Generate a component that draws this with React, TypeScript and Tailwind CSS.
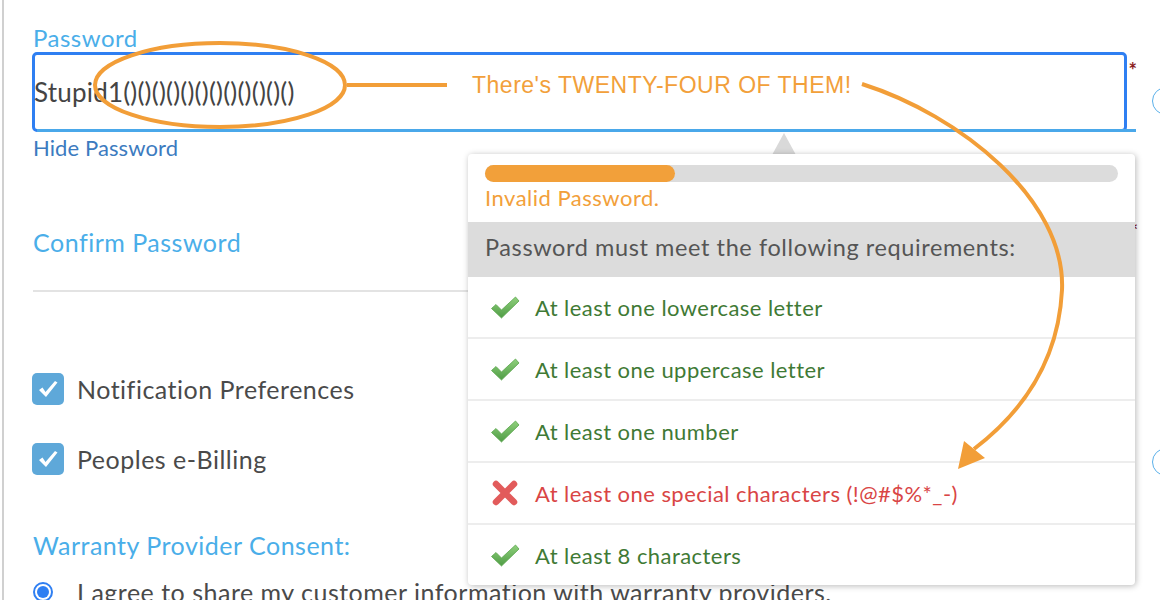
import { Fragment } from "react";

type Rule = {
  label: string;
  ok: boolean;
};

const rules: Rule[] = [
  { label: "At least one lowercase letter", ok: true },
  { label: "At least one uppercase letter", ok: true },
  { label: "At least one number", ok: true },
  { label: "At least one special characters (!@#$%*_-)", ok: false },
  { label: "At least 8 characters", ok: true },
];

const GreenCheck = () => (
  <svg width="30" height="26" viewBox="0 0 30 26">
    <defs>
      <linearGradient id="gc" x1="0" y1="0" x2="0" y2="1">
        <stop offset="0" stopColor="#8fd07c" />
        <stop offset="1" stopColor="#4f9c45" />
      </linearGradient>
    </defs>
    <path d="M1.5 14.5 L6 10.5 L11.5 16 L25.5 3 L29 7 L11.5 24 Z" fill="url(#gc)" stroke="#5aa64c" strokeWidth="0.8" strokeLinejoin="round" />
  </svg>
);

const RedX = () => (
  <svg width="28" height="28" viewBox="0 0 28 28">
    <path d="M5 5 L23 23 M23 5 L5 23" stroke="#e25b5b" strokeWidth="6.5" strokeLinecap="round" />
  </svg>
);

const BoxCheck = () => (
  <div className="flex h-[32px] w-[32px] items-center justify-center rounded-[5px] bg-[#5ea8d9]">
    <svg width="22" height="20" viewBox="0 0 22 20">
      <path d="M2 11 L5.5 8.5 L8.5 13 L18 2 L20.5 3.5 L9 18 Z" fill="#fff" strokeLinejoin="round" />
    </svg>
  </div>
);

const App = () => {
  return (
    <div className="relative h-[600px] w-[1160px] overflow-hidden bg-white font-['Lato',sans-serif]">
      {/* Form column */}
      <div className="ml-[2px] h-full border-l-2 border-[#d0d0d0] pl-[28px] pt-[26px]">
        <div className="ml-[1px] text-[24px] leading-[24px] tracking-[0.5px] text-[#4aaee9]">Password</div>

        <div className="relative mt-[2px] flex h-[80px] w-[1095px] items-center rounded-[5px] border-[3px] border-[#2f7ff2]">
          <span className="-ml-[1px] text-[26px] tracking-[0.2px] text-[#444]">Stupid1()()()()()()()()()()()()</span>
          <div className="absolute -bottom-[3px] left-[2px] -right-[12px] h-[3px] bg-[#4aa8ea]" />
          <span className="absolute -right-[13px] top-[0px] text-[20px] font-bold text-[#8b1c1c]">*</span>
        </div>

        <div className="ml-[1px] mt-[4px] text-[22px] leading-[24px] tracking-[0.1px] text-[#3c7bbf]">Hide Password</div>

        <div className="relative mt-[68px] w-[1095px]">
          <div className="ml-[1px] text-[25px] leading-[28px] tracking-[0.5px] text-[#4aaee9]">Confirm Password</div>
          <span className="absolute -right-[11px] -top-[12px] text-[20px] font-bold text-[#8b1c1c]">*</span>
        </div>
        <div className="ml-[1px] mt-[34px] h-[2px] w-[1094px] bg-[#e3e3e3]" />

        <div className="mt-[81px] flex items-center gap-[13px]">
          <BoxCheck />
          <span className="text-[25px] leading-[28px] tracking-[0.5px] text-[#4a4a4a]">Notification Preferences</span>
        </div>
        <div className="mt-[38px] flex items-center gap-[13px]">
          <BoxCheck />
          <span className="text-[25px] leading-[28px] tracking-[0.5px] text-[#4a4a4a]">Peoples e-Billing</span>
        </div>

        <div className="ml-[1px] mt-[56px] text-[25px] leading-[28px] tracking-[0.5px] text-[#4aaee9]">Warranty Provider Consent:</div>
        <div className="mt-[19px] flex items-center gap-[24px] pl-[1px]">
          <div className="flex h-[20px] w-[20px] items-center justify-center rounded-full border-2 border-[#2f7ff2] bg-white">
            <div className="h-[12px] w-[12px] rounded-full bg-[#2f7ff2]" />
          </div>
          <span className="whitespace-nowrap text-[25px] leading-[28px] tracking-[0.5px] text-[#4a4a4a]">
            I agree to share my customer information with warranty providers.
          </span>
        </div>
      </div>

      {/* Partially visible help circles */}
      <div className="absolute left-[1152px] top-[87px] h-[28px] w-[28px] rounded-full border-[1.5px] border-[#5ab0ea]" />
      <div className="absolute left-[1152px] top-[448px] h-[28px] w-[28px] rounded-full border-[1.5px] border-[#5ab0ea]" />

      {/* Popover arrow */}
      <svg className="absolute left-[772px] top-[133px]" width="24" height="22" viewBox="0 0 24 22">
        <polygon points="12,0 24,22 0,22" fill="#d9d9d9" />
      </svg>

      {/* Requirements popover */}
      <div className="absolute left-[468px] top-[154px] w-[667px] overflow-hidden rounded-[4px] bg-white shadow-[1px_1px_6px_rgba(0,0,0,0.28)]">
        <div className="px-[17px] pt-[11px]">
          <div className="h-[17px] w-full rounded-full bg-[#dcdcdc]">
            <div className="h-full w-[190px] rounded-full bg-[#f2a03a]" />
          </div>
          <div className="mt-[4px] text-[22px] leading-[24px] tracking-[0.5px] text-[#f2a03a]">Invalid Password.</div>
        </div>
        <div className="mt-[12px] flex h-[55px] items-center bg-[#dcdcdc] pb-[4px] pl-[17px] text-[23.5px] tracking-[0.6px] text-[#555]">
          Password must meet the following requirements:
        </div>
        {rules.map((rule, i) => (
          <Fragment key={rule.label}>
            {i > 0 && <div className="h-[2px] bg-[#ededed]" />}
            <div className="flex h-[60px] items-center gap-[15px] pl-[21px]">
              <div className="flex w-[31px] justify-center">{rule.ok ? <GreenCheck /> : <RedX />}</div>
              <span className={`text-[22px] tracking-[0.45px] ${rule.ok ? "text-[#3f7a35]" : "text-[#d94545]"}`}>{rule.label}</span>
            </div>
          </Fragment>
        ))}
      </div>

      {/* Orange annotation */}
      <svg className="pointer-events-none absolute left-0 top-0" width="1160" height="600" viewBox="0 0 1160 600">
        <ellipse cx="220" cy="85" rx="125" ry="42" fill="none" stroke="#f29e38" strokeWidth="4" />
        <line x1="347" y1="85" x2="447" y2="85" stroke="#f29e38" strokeWidth="4" />
        <path d="M862 84 C 960 115, 1066 200, 1062 290 C 1058 370, 1012 420, 974 449" fill="none" stroke="#f29e38" strokeWidth="4" />
        <polygon points="958,469 964,441 985,458" fill="#f29e38" />
      </svg>
      <div className="pointer-events-none absolute left-[472px] top-[72px] font-['Liberation_Sans',sans-serif] text-[23px] leading-[26px] tracking-[0.5px] text-[#f2a03a]">
        There's TWENTY-FOUR OF THEM!
      </div>
    </div>
  );
};

export default App;
